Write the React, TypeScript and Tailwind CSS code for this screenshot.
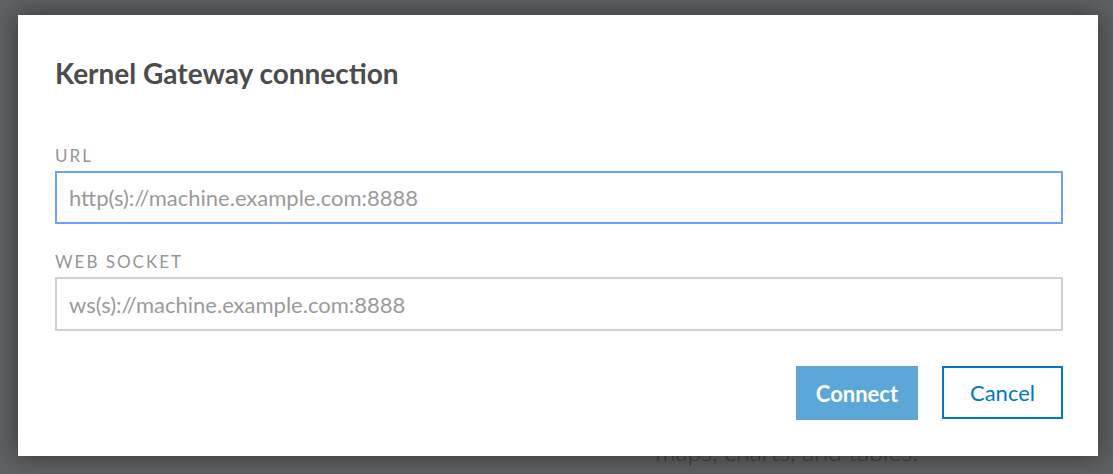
import React from 'react';

const font = { fontFamily: 'Lato, "Open Sans", sans-serif' };

type FieldProps = {
  label: string;
  placeholder: string;
  focused?: boolean;
};

const Field = ({ label, placeholder, focused }: FieldProps) => (
  <label className="block">
    <span className="block text-[17px] leading-[20px] tracking-[2px] text-[#959595] mb-[5px]">
      {label}
    </span>
    <input
      autoFocus={focused}
      placeholder={placeholder}
      className={
        focused
          ? 'block w-full h-[53px] px-[12px] text-[22px] text-[#4c4c4c] placeholder:text-[#9a9a9a] bg-white border-2 border-[#6aa3fb] outline-none'
          : 'block w-full h-[54px] px-[12px] text-[22px] text-[#4c4c4c] placeholder:text-[#9a9a9a] bg-white border-2 border-[#d0d0d0] outline-none'
      }
      style={font}
    />
  </label>
);

export default function App() {
  return (
    <div
      className="relative w-[1113px] h-[474px] overflow-hidden bg-[#5f6062]"
      style={font}
    >
      {/* page content behind the overlay */}
      <p className="absolute right-[195px] top-[436px] text-[25px] leading-[31px] font-light text-[#3b3c3d]">
        maps, charts, and tables.
      </p>
      <div className="absolute left-[18px] top-[15px] w-[1080px] h-[441px] bg-white shadow-[0_0_24px_rgba(0,0,0,0.45)] pl-[37px] pr-[35px] pt-[42px] pb-[36px] flex flex-col">
        <h2 className="text-[28px] leading-[32px] font-bold text-[#4c4c4c]">
          Kernel Gateway connection
        </h2>
        <div className="mt-[57px] flex flex-col gap-[28px]">
          <Field
            label="URL"
            placeholder="http(s)://machine.example.com:8888"
            focused
          />
          <Field
            label="WEB SOCKET"
            placeholder="ws(s)://machine.example.com:8888"
          />
        </div>
        <div className="mt-auto flex justify-end gap-[24px]">
          <button className="w-[122px] h-[54px] bg-[#5aa7d8] border border-[#6d9fc4] text-white text-[22px] font-bold">
            Connect
          </button>
          <button className="w-[121px] h-[53px] bg-white border-2 border-[#0079c1] text-[#0079c1] text-[22px]">
            Cancel
          </button>
        </div>
      </div>
    </div>
  );
}
